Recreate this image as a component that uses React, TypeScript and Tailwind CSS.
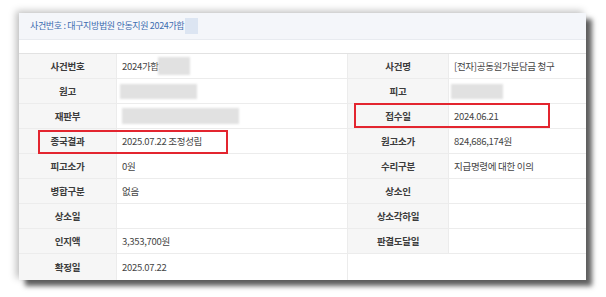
import React from "react";

const font = { fontFamily: '"Noto Sans CJK KR", "Noto Sans", sans-serif' };

function Blur({ w, h, className = "" }: { w: number; h: number; className?: string }) {
  return (
    <span
      className={`inline-block bg-[#e1e1e1] blur-[1px] align-middle ${className}`}
      style={{ width: w, height: h }}
    />
  );
}

function Label({ children, empty }: { children?: React.ReactNode; empty?: boolean }) {
  return (
    <div
      className={`flex items-center justify-center border-r border-[#ececec] font-semibold text-[#3c3c3c] ${
        empty ? "bg-white border-r-0" : "bg-[#f6f6f6]"
      }`}
    >
      {children}
    </div>
  );
}

function Value({ children, right }: { children?: React.ReactNode; right?: boolean }) {
  return (
    <div className={`flex items-center pl-[5px] text-[#444] ${right ? "" : "border-r border-[#ececec]"}`}>
      {children}
    </div>
  );
}

export default function App() {
  const rows: [React.ReactNode, React.ReactNode, React.ReactNode, React.ReactNode, boolean?][] = [
    [
      "사건번호",
      <span className="flex items-center">
        2024가합2
        <Blur w={32} h={18} className="ml-[-6px] bg-[#dedede]" />
      </span>,
      "사건명",
      "[전자]공동원가분담금 청구",
    ],
    ["원고", <Blur w={77} h={15} className="ml-[-2px]" />, "피고", <Blur w={52} h={15} className="ml-[-3px]" />],
    ["재판부", <Blur w={117} h={16} />, "접수일", "2024.06.21"],
    ["종국결과", "2025.07.22 조정성립", "원고소가", "824,686,174원"],
    ["피고소가", "0원", "수리구분", "지급명령에 대한 이의"],
    ["병합구분", "없음", "상소인", ""],
    ["상소일", "", "상소각하일", ""],
    ["인지액", "3,353,700원", "판결도달일", ""],
    ["확정일", "2025.07.22", "", "", true],
  ];

  return (
    <div className="w-[606px] h-[297px] bg-white pl-[19px] pt-[13px]" style={font}>
      <div className="relative w-[567px] bg-white shadow-[6px_6px_5px_rgba(0,0,0,0.62),-3px_-2px_7px_rgba(0,0,0,0.25)]">
        <div className="flex h-[27px] items-center border-b border-[#e8ebf0] bg-[#f4f6fa] pl-[11px] text-[9px] tracking-[-0.35px] text-[#3d6db0]">
          사건번호 : 대구지방법원 안동지원 2024가합
          <span className="ml-[1px] inline-block h-[16px] w-[13px] bg-[#dce5f2] blur-[0.6px]" />
        </div>
        <div className="h-[13px]" />
        <div className="border-t border-[#e2e2e2] text-[9.5px] tracking-[-0.3px]">
          {rows.map((r, i) => (
            <div
              key={i}
              className={`grid grid-cols-[98px_231px_101px_137px] ${
                i === rows.length - 1 ? "h-[26px]" : "h-[25px] border-b border-[#ececec]"
              }`}
            >
              <Label>{r[0]}</Label>
              <Value>{r[1]}</Value>
              <Label empty={r[4]}>{r[2]}</Label>
              <Value right>{r[3]}</Value>
            </div>
          ))}
        </div>
        <div className="absolute left-[19px] top-[117px] h-[24px] w-[190px] border-2 border-[#e3252f]" />
        <div className="absolute left-[335px] top-[90px] h-[25px] w-[196px] border-2 border-[#e3252f]" />
      </div>
    </div>
  );
}
